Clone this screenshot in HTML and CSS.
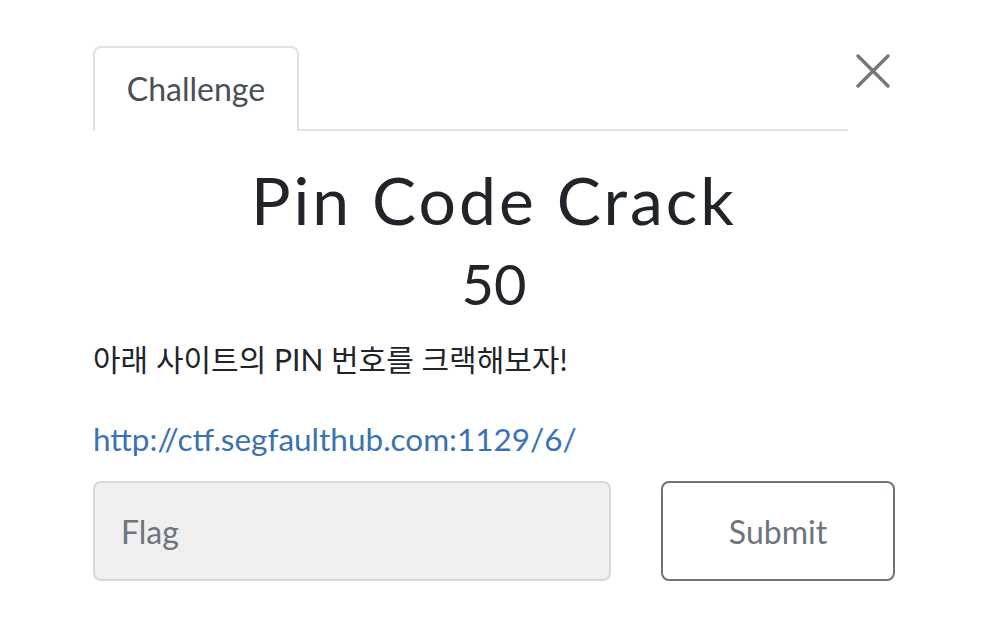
FILE: index.html
```html
<!DOCTYPE html>
<html lang="ko">
<head>
<meta charset="utf-8">
<title>Challenge</title>
<link rel="stylesheet" href="styles.css">
</head>
<body>
<div class="modal">
  <div class="modal-header">
    <ul class="tabs">
      <li class="tab active">Challenge</li>
    </ul>
    <button class="close" aria-label="Close">
      <svg width="34" height="34" viewBox="0 0 34 34"><path d="M2 2 L32 32 M32 2 L2 32" stroke="#777" stroke-width="3.4" stroke-linecap="round" fill="none"/></svg>
    </button>
  </div>
  <h2 class="title">Pin Code Crack</h2>
  <h3 class="value">50</h3>
  <p class="desc">아래 사이트의 PIN 번호를 크랙해보자!</p>
  <p class="link"><a href="#">http://ctf.segfaulthub.com:1129/6/</a></p>
  <div class="submit-row">
    <input class="flag" type="text" placeholder="Flag">
    <button class="submit">Submit</button>
  </div>
</div>
</body>
</html>
```
FILE: styles.css
```css
html, body {
  margin: 0;
  padding: 0;
  background: #fff;
}
body {
  font-family: Lato, "Noto Sans CJK KR", sans-serif;
  color: #212529;
}
.modal {
  width: 802px;
  padding: 46px 0 0 93px;
}
.modal-header {
  display: flex;
  align-items: flex-start;
}
.tabs {
  list-style: none;
  margin: 0;
  padding: 0;
  width: 755px;
  display: flex;
  border-bottom: 2px solid #dee2e6;
}
.tab {
  width: 202px;
  height: 81px;
  border: 2px solid #dee2e6;
  border-bottom: none;
  border-radius: 8px 8px 0 0;
  margin-bottom: -2px;
  background: #fff;
  color: #495057;
  font-size: 32px;
  display: flex;
  align-items: center;
  justify-content: center;
  padding-bottom: 2px;
  box-sizing: content-box;
}
.close {
  margin-left: 8px;
  margin-top: 8px;
  padding: 0;
  border: none;
  background: none;
  width: 34px;
  height: 34px;
  cursor: pointer;
}
.close svg { display: block; }
.title {
  margin: 29px 0 0;
  text-align: center;
  font-weight: 400;
  font-size: 66px;
  letter-spacing: 3px;
  line-height: 80px;
}
.value {
  margin: 4px 0 0;
  text-align: center;
  font-weight: 400;
  font-size: 56px;
  line-height: 80px;
}
.desc {
  margin: 0;
  font-size: 30px;
  line-height: 40px;
  padding-top: 15px;
}
.link {
  margin: 40px 0 0;
  font-size: 31.5px;
  line-height: 40px;
}
.link a {
  color: #3b73b2;
  text-decoration: none;
}
.submit-row {
  display: flex;
  gap: 50px;
  margin-top: 22px;
}
.flag {
  width: 518px;
  height: 100px;
  box-sizing: border-box;
  border: 2px solid #d6d8da;
  border-radius: 8px;
  background: #efefef;
  padding: 0 26px;
  font-family: Lato, sans-serif;
  font-size: 32px;
  color: #495057;
}
.flag::placeholder { color: #6c757d; }
.submit {
  width: 234px;
  height: 100px;
  box-sizing: border-box;
  border: 2px solid #6c757d;
  border-radius: 8px;
  background: #fff;
  color: #6c757d;
  font-family: Lato, sans-serif;
  font-size: 32px;
}
```
